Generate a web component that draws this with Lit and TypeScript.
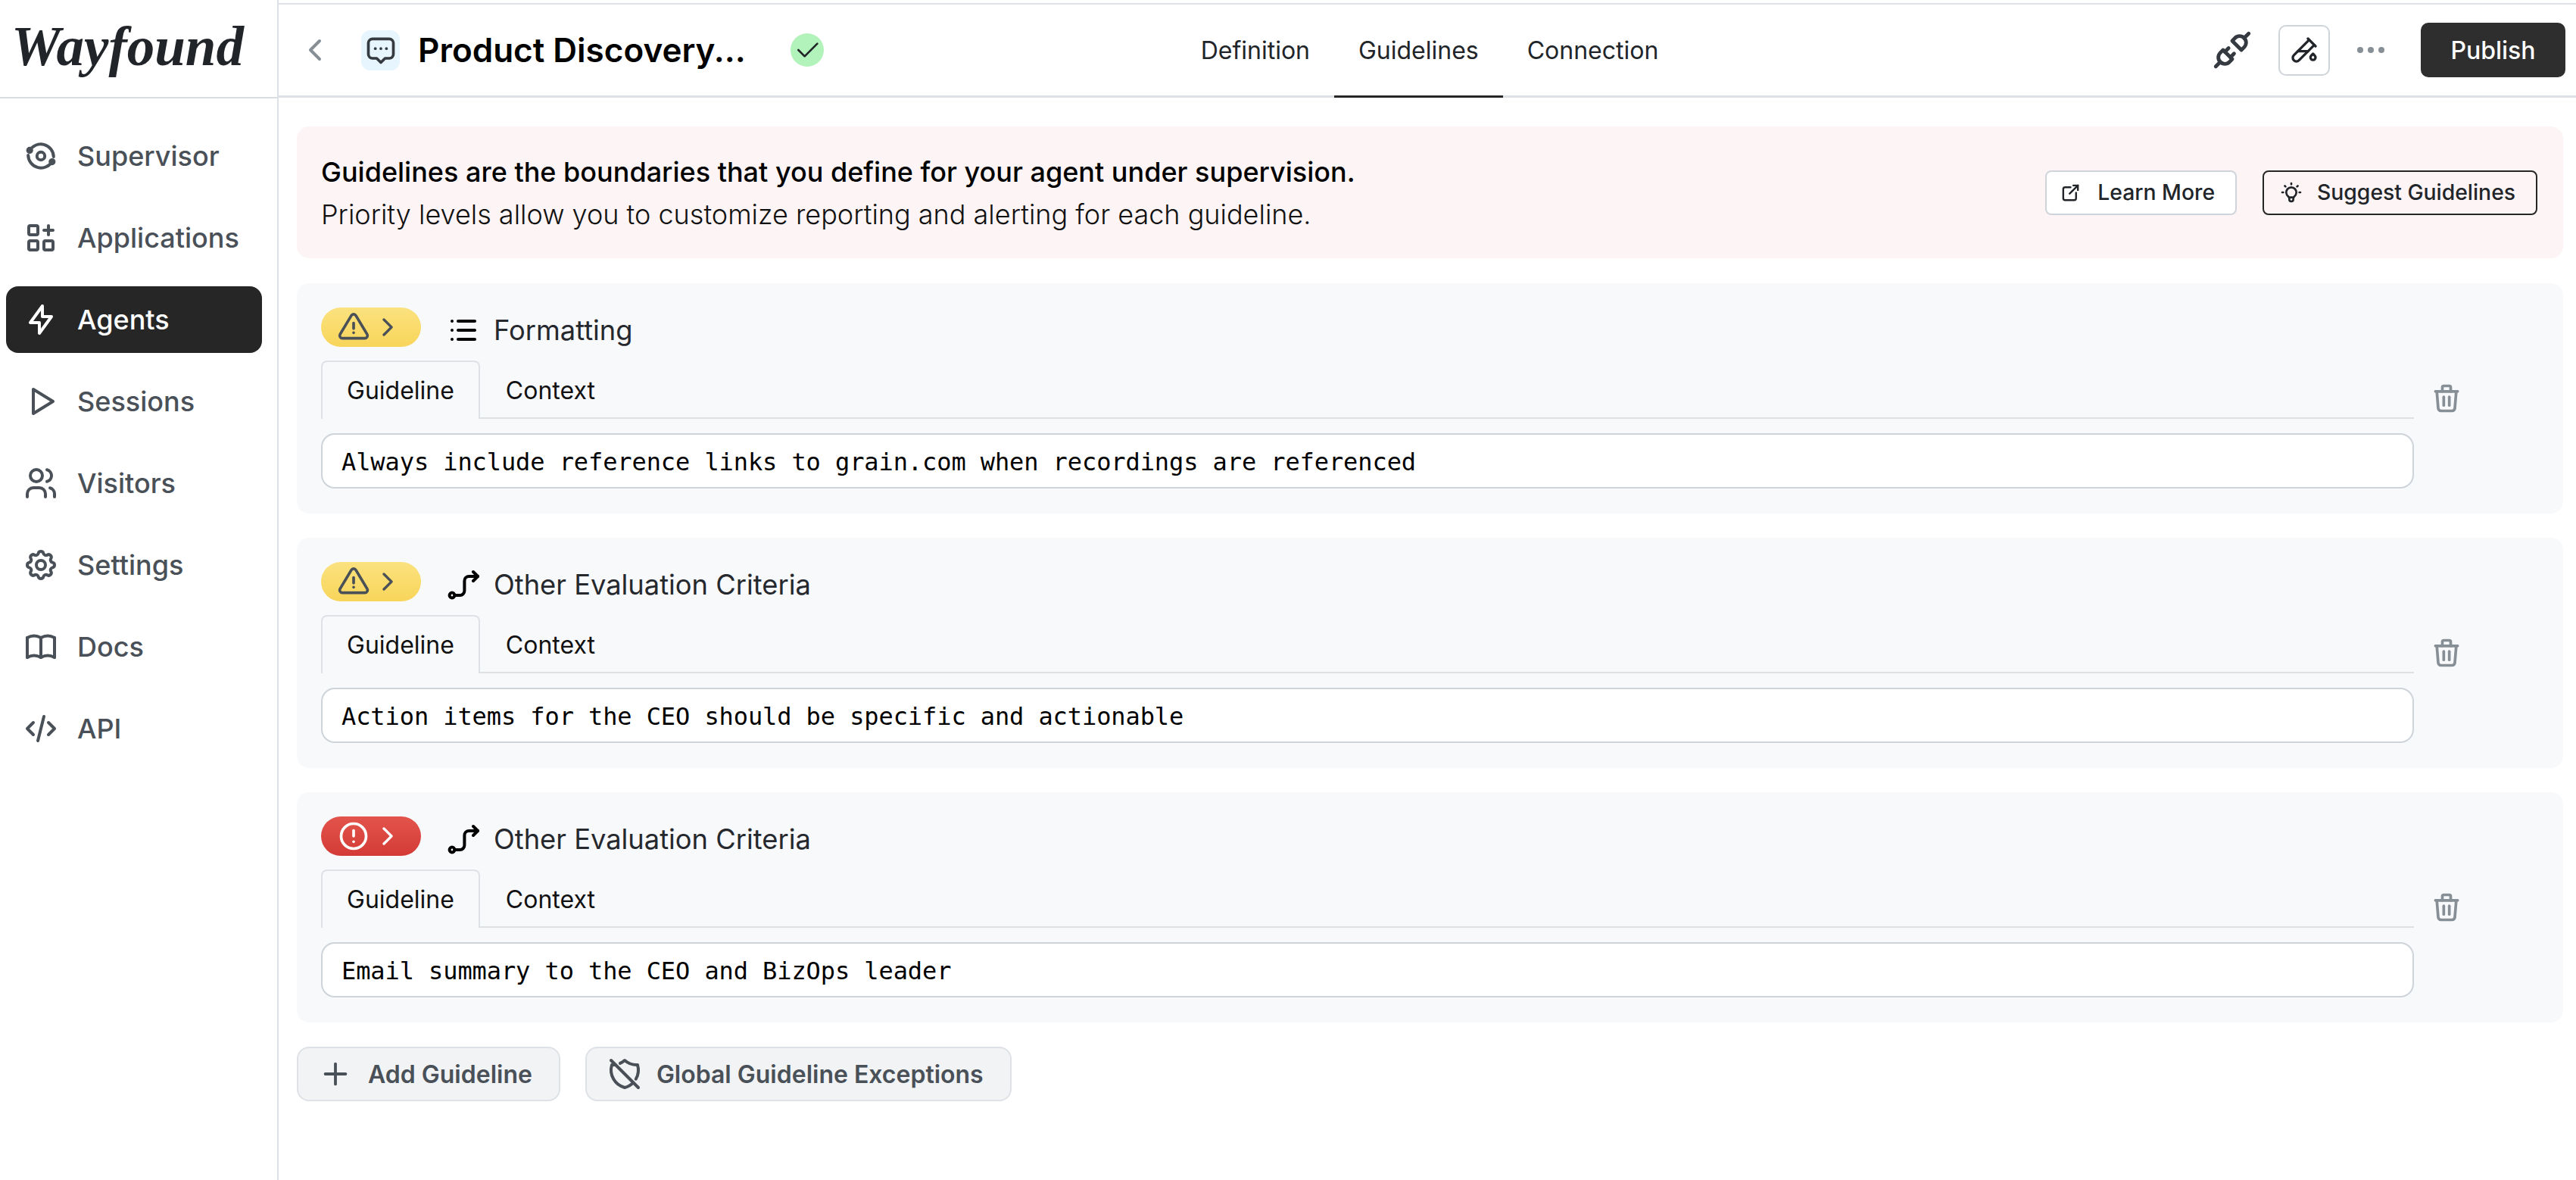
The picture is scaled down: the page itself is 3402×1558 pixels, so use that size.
import { LitElement, html, css, svg } from 'lit';
import { customElement } from 'lit/decorators.js';

const icons: Record<string, ReturnType<typeof svg>> = {
    supervisor: svg`<circle cx="12" cy="12" r="2.6"/><path d="M4.5 8.5a8.5 8.5 0 0 1 15.9 4"/><path d="M19.5 15.5a8.5 8.5 0 0 1 -15.9 -4"/><circle cx="4.6" cy="8.2" r="1.3" fill="currentColor"/><circle cx="19.4" cy="15.8" r="1.3" fill="currentColor"/>`,
    apps: svg`<path d="M4 4m0 1a1 1 0 0 1 1 -1h4a1 1 0 0 1 1 1v4a1 1 0 0 1 -1 1h-4a1 1 0 0 1 -1 -1z"/><path d="M4 14m0 1a1 1 0 0 1 1 -1h4a1 1 0 0 1 1 1v4a1 1 0 0 1 -1 1h-4a1 1 0 0 1 -1 -1z"/><path d="M14 14m0 1a1 1 0 0 1 1 -1h4a1 1 0 0 1 1 1v4a1 1 0 0 1 -1 1h-4a1 1 0 0 1 -1 -1z"/><path d="M14 7l6 0"/><path d="M17 4l0 6"/>`,
    bolt: svg`<path d="M13 3l0 7l6 0l-8 11l0 -7l-6 0l8 -11"/>`,
    play: svg`<path d="M7 4v16l13 -8z"/>`,
    users: svg`<path d="M9 7m-4 0a4 4 0 1 0 8 0a4 4 0 1 0 -8 0"/><path d="M3 21v-2a4 4 0 0 1 4 -4h4a4 4 0 0 1 4 4v2"/><path d="M16 3.13a4 4 0 0 1 0 7.75"/><path d="M21 21v-2a4 4 0 0 0 -3 -3.85"/>`,
    settings: svg`<path d="M10.325 4.317c.426 -1.756 2.924 -1.756 3.35 0a1.724 1.724 0 0 0 2.573 1.066c1.543 -.94 3.31 .826 2.37 2.37a1.724 1.724 0 0 0 1.065 2.572c1.756 .426 1.756 2.924 0 3.35a1.724 1.724 0 0 0 -1.066 2.573c.94 1.543 -.826 3.31 -2.37 2.37a1.724 1.724 0 0 0 -2.572 1.065c-.426 1.756 -2.924 1.756 -3.35 0a1.724 1.724 0 0 0 -2.573 -1.066c-1.543 .94 -3.31 -.826 -2.37 -2.37a1.724 1.724 0 0 0 -1.065 -2.572c-1.756 -.426 -1.756 -2.924 0 -3.35a1.724 1.724 0 0 0 1.066 -2.573c-.94 -1.543 .826 -3.31 2.37 -2.37c1 .608 2.296 .07 2.572 -1.065z"/><path d="M9 12a3 3 0 1 0 6 0a3 3 0 0 0 -6 0"/>`,
    book: svg`<path d="M3 19a9 9 0 0 1 9 0a9 9 0 0 1 9 0"/><path d="M3 6a9 9 0 0 1 9 0a9 9 0 0 1 9 0"/><path d="M3 6l0 13"/><path d="M12 6l0 13"/><path d="M21 6l0 13"/>`,
    code: svg`<path d="M7 8l-4 4l4 4"/><path d="M17 8l4 4l-4 4"/><path d="M14 4l-4 16"/>`,
    back: svg`<path d="M15 6l-6 6l6 6"/>`,
    chat: svg`<path d="M9 18h-3a3 3 0 0 1 -3 -3v-8a3 3 0 0 1 3 -3h12a3 3 0 0 1 3 3v8a3 3 0 0 1 -3 3h-3l-3 3l-3 -3z"/><path d="M8 11h.01"/><path d="M12 11h.01"/><path d="M16 11h.01"/>`,
    check: svg`<path d="M5 12l5 5l10 -10"/>`,
    plug: svg`<path d="M7 12l5 5l-1.5 1.5a3.536 3.536 0 1 1 -5 -5l1.5 -1.5z"/><path d="M17 12l-5 -5l1.5 -1.5a3.536 3.536 0 1 1 5 5l-1.5 1.5z"/><path d="M3 21l2.5 -2.5"/><path d="M18.5 5.5l2.5 -2.5"/><path d="M10 11l-2 2"/><path d="M13 14l-2 2"/>`,
    pipe: svg`<path d="M20 8.04l-12.122 12.124a2.857 2.857 0 1 1 -4.041 -4.04l12.122 -12.124"/><path d="M7 13h8"/><path d="M19 15l1.5 1.6a2 2 0 1 1 -3 0l1.5 -1.6z"/><path d="M15 3l6 6"/>`,
    external: svg`<path d="M12 6h-6a2 2 0 0 0 -2 2v10a2 2 0 0 0 2 2h10a2 2 0 0 0 2 -2v-6"/><path d="M11 13l9 -9"/><path d="M15 4h5v5"/>`,
    bulb: svg`<path d="M3 12h1m8 -9v1m8 8h1m-15.4 -6.4l.7 .7m12.1 -.7l-.7 .7"/><path d="M9 16a5 5 0 1 1 6 0a3.5 3.5 0 0 0 -1 3a2 2 0 0 1 -4 0a3.5 3.5 0 0 0 -1 -3"/><path d="M9.7 17l4.6 0"/>`,
    warn: svg`<path d="M12 9v4"/><path d="M10.363 3.591l-8.106 13.534a1.914 1.914 0 0 0 1.636 2.871h16.214a1.914 1.914 0 0 0 1.636 -2.87l-8.106 -13.536a1.914 1.914 0 0 0 -3.274 0z"/><path d="M12 16h.01"/>`,
    alert: svg`<path d="M3 12a9 9 0 1 0 18 0a9 9 0 0 0 -18 0"/><path d="M12 8v4"/><path d="M12 16h.01"/>`,
    chevron: svg`<path d="M9 6l6 6l-6 6"/>`,
    list: svg`<path d="M9 6l11 0"/><path d="M9 12l11 0"/><path d="M9 18l11 0"/><path d="M5 6l0 .01"/><path d="M5 12l0 .01"/><path d="M5 18l0 .01"/>`,
    route: svg`<circle cx="5" cy="19" r="1.7"/><path d="M6.7 19h3.5a3 3 0 0 0 3 -3v-6.5a3 3 0 0 1 3 -3h5.8"/><path d="M19 3.5l3 3l-3 3"/>`,
    trash: svg`<path d="M4 7l16 0"/><path d="M10 11l0 6"/><path d="M14 11l0 6"/><path d="M5 7l1 12a2 2 0 0 0 2 2h8a2 2 0 0 0 2 -2l1 -12"/><path d="M9 7v-3a1 1 0 0 1 1 -1h4a1 1 0 0 1 1 1v3"/>`,
    plus: svg`<path d="M12 5l0 14"/><path d="M5 12l14 0"/>`,
    shieldOff: svg`<path d="M17.67 17.667a12 12 0 0 1 -5.67 3.333a12 12 0 0 1 -8.5 -15c.794 .036 1.583 -.006 2.357 -.124m3.128 -.926a11.997 11.997 0 0 0 3.015 -1.95a12 12 0 0 0 8.5 3a12 12 0 0 1 -1.116 9.376"/><path d="M3 3l18 18"/>`,
};

function icon(name: string, size: number) {
    return html`<svg class="icon" width=${size} height=${size} viewBox="0 0 24 24" fill="none" stroke="currentColor" stroke-width="2" stroke-linecap="round" stroke-linejoin="round">${icons[name]}</svg>`;
}

const navItems = [
    { label: 'Supervisor', icon: 'supervisor' },
    { label: 'Applications', icon: 'apps' },
    { label: 'Agents', icon: 'bolt', active: true },
    { label: 'Sessions', icon: 'play' },
    { label: 'Visitors', icon: 'users' },
    { label: 'Settings', icon: 'settings' },
    { label: 'Docs', icon: 'book' },
    { label: 'API', icon: 'code' },
];

const guidelines = [
    { level: 'warn', icon: 'list', title: 'Formatting', text: 'Always include reference links to grain.com when recordings are referenced' },
    { level: 'warn', icon: 'route', title: 'Other Evaluation Criteria', text: 'Action items for the CEO should be specific and actionable' },
    { level: 'alert', icon: 'route', title: 'Other Evaluation Criteria', text: 'Email summary to the CEO and BizOps leader' },
];

@customElement('app-root')
export class AppRoot extends LitElement {
    static styles = css`
        :host {
            display: flex;
            height: 100vh;
            font-family: Inter, 'Noto Sans', sans-serif;
            color: #212529;
            background: #fff;
            overflow: hidden;
        }
        .icon {
            display: block;
            flex: none;
        }

        /* sidebar */
        .sidebar {
            width: 368px;
            flex: none;
            box-sizing: border-box;
            border-right: 2px solid #dee2e6;
        }
        .logo {
            height: 130px;
            box-sizing: border-box;
            border-bottom: 2px solid #dadde0;
            display: flex;
            align-items: center;
            padding: 0 0 6px 15px;
        }
        .logo span {
            font-family: 'Liberation Serif', serif;
            font-style: italic;
            font-weight: 700;
            font-size: 73px;
            color: #212529;
            line-height: 1;
        }
        .nav {
            display: flex;
            flex-direction: column;
            gap: 20px;
            padding: 32px 20px 0 8px;
        }
        .nav-item {
            display: flex;
            align-items: center;
            gap: 24px;
            height: 88px;
            padding-left: 22px;
            border-radius: 16px;
            font-size: 36px;
            font-weight: 450;
            color: #495057;
        }
        .nav-item.active {
            background: #262626;
            color: #fff;
        }

        /* top bar */
        .main {
            flex: 1;
            min-width: 0;
            display: flex;
            flex-direction: column;
            padding-top: 4px;
        }
        .topbar {
            height: 125px;
            box-sizing: border-box;
            border-top: 2px solid #dee2e6;
            border-bottom: 3px solid #dee2e6;
            display: grid;
            grid-template-columns: 1fr auto 1fr;
            align-items: center;
            padding: 0 14px 0 20px;
        }
        .top-left,
        .top-right {
            display: flex;
            align-items: center;
        }
        .top-right {
            justify-content: flex-end;
        }
        .back {
            color: #868e96;
            margin: 0 37px 0 4px;
        }
        .chat {
            width: 51px;
            height: 53px;
            border-radius: 12px;
            background: #e7f5ff;
            color: #343a40;
            display: flex;
            align-items: center;
            justify-content: center;
            margin-right: 24px;
        }
        .agent-name {
            font-size: 44px;
            font-weight: 600;
            color: #000;
            margin-right: 59px;
            white-space: nowrap;
        }
        .status {
            width: 44px;
            height: 44px;
            border-radius: 50%;
            background: #b2f2bb;
            color: #212529;
            display: flex;
            align-items: center;
            justify-content: center;
        }
        .status svg {
            stroke-width: 1.6;
        }
        .tabs {
            display: flex;
            align-self: stretch;
        }
        .tab {
            display: flex;
            align-items: center;
            padding: 0 32px;
            font-size: 32px;
            color: #212529;
            border-bottom: 3px solid transparent;
            margin-bottom: -3px;
        }
        .tab.active {
            border-bottom-color: #262626;
        }
        .plug {
            color: #343a40;
            margin-right: 32px;
        }
        .test-btn {
            width: 68px;
            height: 67px;
            box-sizing: border-box;
            border: 2px solid #ced4da;
            border-radius: 10px;
            display: flex;
            align-items: center;
            justify-content: center;
            color: #212529;
            margin-right: 36px;
        }
        .dots {
            display: flex;
            gap: 6px;
            margin-right: 48px;
        }
        .dots i {
            width: 8px;
            height: 8px;
            border-radius: 50%;
            background: #868e96;
        }
        .publish {
            width: 191px;
            height: 72px;
            border-radius: 10px;
            background: #2e2e2e;
            color: #fff;
            font-size: 32px;
            font-weight: 500;
            display: flex;
            align-items: center;
            justify-content: center;
        }

        /* content */
        .content {
            padding: 38px 17px 0 24px;
            display: flex;
            flex-direction: column;
        }
        .banner {
            height: 174px;
            box-sizing: border-box;
            background: #fdf4f5;
            border-radius: 16px;
            display: flex;
            align-items: center;
            justify-content: space-between;
            padding: 0 34px 0 32px;
            margin-bottom: 33px;
        }
        .banner-text {
            padding-top: 2px;
            font-size: 36px;
            font-weight: 300;
            line-height: 56px;
            color: #111;
            white-space: nowrap;
        }
        .banner-text strong {
            display: block;
            font-weight: 500;
            color: #000;
        }
        .banner-actions {
            display: flex;
            gap: 34px;
        }
        .ghost {
            height: 59px;
            box-sizing: border-box;
            display: flex;
            align-items: center;
            gap: 21px;
            padding: 0 27px 0 17px;
            border: 2px solid #ced4da;
            border-radius: 8px;
            background: #fff;
            font-size: 28.3px;
            font-weight: 500;
            color: #212529;
            white-space: nowrap;
        }
        .ghost.dark {
            border-color: #262626;
            background: transparent;
            padding: 0 27px 0 20px;
            gap: 18px;
        }
        .card {
            height: 304px;
            box-sizing: border-box;
            display: flex;
            align-items: center;
            background: #f8f9fb;
            border-radius: 16px;
            padding: 32px 0 33px 32px;
            margin-bottom: 32px;
        }
        .card-body {
            width: 2764px;
            flex: none;
        }
        .card-head {
            display: flex;
            align-items: flex-start;
            height: 70px;
        }
        .level {
            width: 132px;
            height: 52px;
            border-radius: 26px;
            display: flex;
            align-items: center;
            gap: 3px;
            padding-left: 21px;
            box-sizing: border-box;
            flex: none;
        }
        .level.warn {
            background: linear-gradient(#fbe27f, #f8d55a);
            color: #495057;
        }
        .level.alert {
            background: linear-gradient(#e2544c, #d43b36);
            color: #fff;
        }
        .kind {
            color: #000;
            margin: 6px 17px 0 31px;
        }
        .card-title {
            font-size: 36.3px;
            line-height: 60px;
            color: #25282d;
        }
        .card-tabs {
            display: flex;
            border-bottom: 2px solid #dee2e6;
            height: 75px;
            box-sizing: content-box;
        }
        .card-tab {
            display: flex;
            align-items: center;
            padding: 0 32px;
            font-size: 32px;
            color: #111;
            box-sizing: border-box;
            border: 2px solid transparent;
            border-bottom: none;
            height: 77px;
            margin-bottom: -2px;
        }
        .card-tab.active {
            border-color: #dee2e6;
            border-radius: 8px 8px 0 0;
            background: #f8f9fb;
        }
        .field {
            margin-top: 19px;
            height: 73px;
            box-sizing: border-box;
            display: flex;
            align-items: center;
            padding: 2px 24px 0 25px;
            background: #fff;
            border: 2px solid #ced4da;
            border-radius: 18px;
            font-family: 'DejaVu Sans Mono', 'Liberation Mono', monospace;
            font-size: 32px;
            letter-spacing: -0.09px;
            color: #000;
            white-space: nowrap;
        }
        .trash {
            color: #868e96;
            margin-left: 21px;
        }
        .footer {
            display: flex;
            gap: 33px;
        }
        .footer-btn {
            height: 72px;
            box-sizing: border-box;
            display: flex;
            align-items: center;
            gap: 20px;
            padding: 0 35px 0 26px;
            background: #f1f3f5;
            border: 2px solid #dee2e6;
            border-radius: 16px;
            font-size: 32px;
            font-weight: 600;
            color: #495057;
            white-space: nowrap;
        }
        .footer-btn.shield {
            gap: 18px;
        }
    `;

    render() {
        return html`
            <aside class="sidebar">
                <div class="logo"><span>Wayfound</span></div>
                <nav class="nav">
                    ${navItems.map(
                        (item) => html`
                            <div class="nav-item ${item.active ? 'active' : ''}">
                                ${icon(item.icon, 48)}
                                <span>${item.label}</span>
                            </div>
                        `
                    )}
                </nav>
            </aside>
            <div class="main">
                <header class="topbar">
                    <div class="top-left">
                        <span class="back">${icon('back', 48)}</span>
                        <span class="chat">${icon('chat', 44)}</span>
                        <span class="agent-name">Product Discovery...</span>
                        <span class="status">${icon('check', 40)}</span>
                    </div>
                    <div class="tabs">
                        <div class="tab">Definition</div>
                        <div class="tab active">Guidelines</div>
                        <div class="tab">Connection</div>
                    </div>
                    <div class="top-right">
                        <span class="plug">${icon('plug', 58)}</span>
                        <span class="test-btn">${icon('pipe', 40)}</span>
                        <span class="dots"><i></i><i></i><i></i></span>
                        <div class="publish">Publish</div>
                    </div>
                </header>
                <main class="content">
                    <section class="banner">
                        <div class="banner-text">
                            <strong>Guidelines are the boundaries that you define for your agent under supervision.</strong>
                            Priority levels allow you to customize reporting and alerting for each guideline.
                        </div>
                        <div class="banner-actions">
                            <div class="ghost">${icon('external', 29)}<span>Learn More</span></div>
                            <div class="ghost dark">${icon('bulb', 32)}<span>Suggest Guidelines</span></div>
                        </div>
                    </section>
                    ${guidelines.map(
                        (g) => html`
                            <section class="card">
                                <div class="card-body">
                                    <div class="card-head">
                                        <span class="level ${g.level}">
                                            ${icon(g.level, 44)}${icon('chevron', 40)}
                                        </span>
                                        <span class="kind">${icon(g.icon, 48)}</span>
                                        <span class="card-title">${g.title}</span>
                                    </div>
                                    <div class="card-tabs">
                                        <div class="card-tab active">Guideline</div>
                                        <div class="card-tab">Context</div>
                                    </div>
                                    <div class="field">${g.text}</div>
                                </div>
                                <span class="trash">${icon('trash', 44)}</span>
                            </section>
                        `
                    )}
                    <div class="footer">
                        <div class="footer-btn">${icon('plus', 46)}<span>Add Guideline</span></div>
                        <div class="footer-btn shield">${icon('shieldOff', 48)}<span>Global Guideline Exceptions</span></div>
                    </div>
                </main>
            </div>
        `;
    }
}
